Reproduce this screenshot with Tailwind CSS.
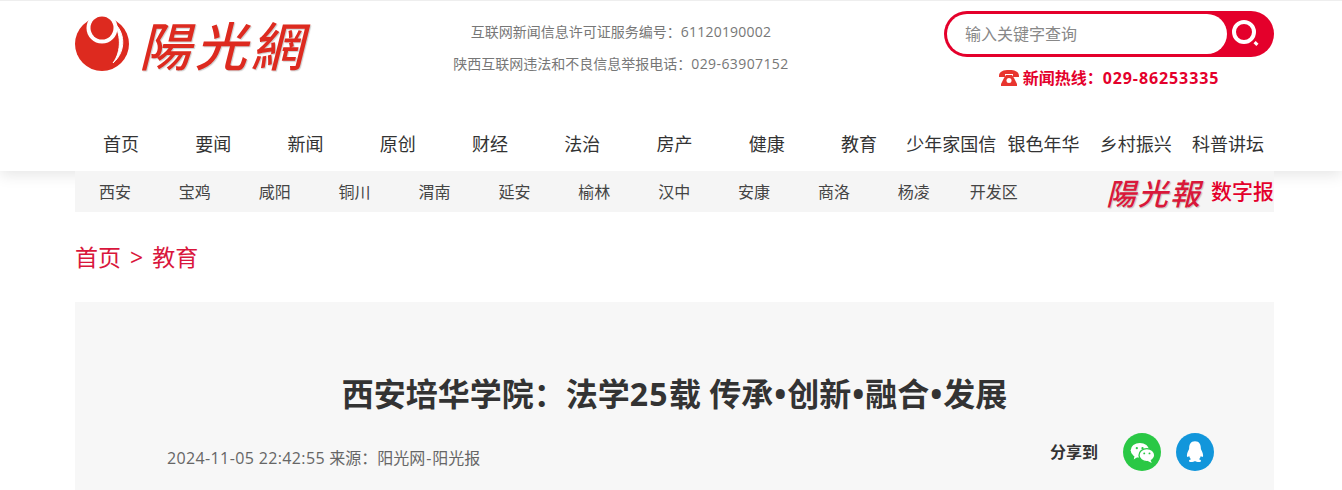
<!DOCTYPE html>
<html lang="zh-CN">
<head>
    <meta charset="UTF-8">
    <title>西安培华学院：法学25载 传承•创新•融合•发展</title>
    <script src="https://cdn.jsdelivr.net/npm/@tailwindcss/browser@4"></script>
</head>
<body class="bg-white h-[490px] overflow-hidden font-['Open_Sans','Noto_Sans_CJK_SC',sans-serif]">
    <!-- Header -->
    <header class="bg-white h-[171px] border-t border-[#eee] shadow-[0_4px_14px_rgba(0,0,0,0.1)] relative">
        <div class="w-[1199px] ml-[75px]">
            <div class="flex h-[119px]">
                <!-- Logo -->
                <div class="w-[330px] flex items-start pt-[12px]">
                    <svg width="58" height="60" viewBox="0 0 58 60" class="shrink-0">
                        <circle cx="27" cy="31" r="27" fill="#dd2a1f"/>
                        <circle cx="27" cy="15" r="15.5" fill="#fff"/>
                        <circle cx="27" cy="15" r="11.5" fill="#dd2a1f"/>
                        <path d="M38 9 C50 18 52 38 38 50 C47 38 46 20 38 9 Z" fill="#fff" stroke="#fff" stroke-width="1"/>
                    </svg>
                    <span class="ml-[6px] text-[52px] leading-[62px] tracking-[4px] text-[#dd2a1f] font-medium italic font-['Noto_Sans_CJK_TC',sans-serif] whitespace-nowrap [text-shadow:1px_1px_1px_rgba(0,0,0,0.2)]">陽光網</span>
                </div>
                <!-- Licence -->
                <div class="w-[430px] text-center text-sm text-[#777] ml-[1px] pt-[20px]">
                    <p class="leading-[22px]">互联网新闻信息许可证服务编号：<span class="tracking-[0.2px]">61120190002</span></p>
                    <p class="leading-[22px] mt-[10px]">陕西互联网违法和不良信息举报电话：<span class="tracking-[0.4px]">029-63907152</span></p>
                </div>
                <!-- Search -->
                <div class="ml-auto w-[330px] pt-[10px]">
                    <div class="h-[46px] rounded-full bg-[#e4002b] flex p-[3px] pr-0">
                        <div class="w-[280px] bg-white rounded-full flex items-center pl-[18px] text-base text-[#888]">输入关键字查询</div>
                        <div class="flex-1 flex items-center pl-[4px]">
                            <svg width="30" height="30" viewBox="0 0 30 30">
                                <circle cx="13" cy="13" r="10" fill="none" stroke="#fff" stroke-width="4"/>
                                <rect x="23" y="23" width="4" height="3" transform="rotate(45 25 24.5)" fill="#fff"/>
                            </svg>
                        </div>
                    </div>
                    <div class="flex items-center justify-center mt-[10px] text-[#e4002b] font-bold text-base leading-[22px]">
                        <svg width="20" height="18" viewBox="0 0 20 18" class="mr-[4px]">
                            <path d="M0 7 C0 2 5 1 10 1 C15 1 20 2 20 7 L20 8 L14 8 L14 5 L6 5 L6 8 L0 8 Z" fill="#e8352e"/>
                            <path d="M5 9 L7 6 L13 6 L15 9 L18 15 L18 17 L2 17 L2 15 Z" fill="#e8352e"/>
                            <circle cx="10" cy="11.5" r="2.5" fill="#fff"/>
                        </svg>
                        <span>新闻热线：<span class="tracking-[0.9px]">029-86253335</span></span>
                    </div>
                </div>
            </div>
            <!-- Main nav -->
            <nav class="flex text-lg text-[#333] leading-[48px]">
                <a class="flex-1 text-center whitespace-nowrap">首页</a>
                <a class="flex-1 text-center whitespace-nowrap">要闻</a>
                <a class="flex-1 text-center whitespace-nowrap">新闻</a>
                <a class="flex-1 text-center whitespace-nowrap">原创</a>
                <a class="flex-1 text-center whitespace-nowrap">财经</a>
                <a class="flex-1 text-center whitespace-nowrap">法治</a>
                <a class="flex-1 text-center whitespace-nowrap">房产</a>
                <a class="flex-1 text-center whitespace-nowrap">健康</a>
                <a class="flex-1 text-center whitespace-nowrap">教育</a>
                <a class="flex-1 text-center whitespace-nowrap">少年家国信</a>
                <a class="flex-1 text-center whitespace-nowrap">银色年华</a>
                <a class="flex-1 text-center whitespace-nowrap">乡村振兴</a>
                <a class="flex-1 text-center whitespace-nowrap">科普讲坛</a>
            </nav>
        </div>
    </header>

    <main class="w-[1199px] ml-[75px] relative">
        <!-- City nav -->
        <div class="h-[41px] bg-[#f5f5f5] flex items-center text-base text-[#444]">
            <a class="w-[79.9px] text-center">西安</a>
            <a class="w-[79.9px] text-center">宝鸡</a>
            <a class="w-[79.9px] text-center">咸阳</a>
            <a class="w-[79.9px] text-center">铜川</a>
            <a class="w-[79.9px] text-center">渭南</a>
            <a class="w-[79.9px] text-center">延安</a>
            <a class="w-[79.9px] text-center">榆林</a>
            <a class="w-[79.9px] text-center">汉中</a>
            <a class="w-[79.9px] text-center">安康</a>
            <a class="w-[79.9px] text-center">商洛</a>
            <a class="w-[79.9px] text-center">杨凌</a>
            <a class="w-[79.9px] text-center">开发区</a>
            <div class="ml-auto flex items-center">
                <span class="text-[30px] leading-[36px] tracking-[2px] text-[#d9183a] font-medium italic font-['Noto_Sans_CJK_TC',sans-serif] whitespace-nowrap [text-shadow:1px_1px_1px_rgba(0,0,0,0.2)]">陽光報</span>
                <span class="ml-[9px] text-[21px] font-medium text-[#e4002b]">数字报</span>
            </div>
        </div>

        <!-- Breadcrumb -->
        <div class="h-[90px] flex items-center text-[23px] text-[#d9163c]">
            <a>首页</a><span class="mx-[9px]">&gt;</span><a>教育</a>
        </div>

        <!-- Article head -->
        <div class="bg-[#f7f7f7] h-[188px] pt-[68px] relative">
            <h1 class="text-center text-[32px] leading-[48px] font-bold text-[#333]">西安培华学院：法学<span class="tracking-[1.3px]">25</span>载 传承<span class="mx-[1px]">•</span>创新<span class="mx-[1px]">•</span>融合<span class="mx-[1px]">•</span>发展</h1>
            <div class="flex items-center justify-between pl-[92px] pr-[60px] mt-[15px]">
                <p class="text-base text-[#666] mt-[12px]"><span class="tracking-[0.37px]">2024-11-05 22:42:55</span> 来源：阳光网<span class="mx-[1px]">-</span>阳光报</p>
                <div class="flex items-center">
                    <span class="text-base font-bold text-[#333] mr-[25px]">分享到</span>
                    <span class="w-[38px] h-[38px] rounded-full bg-[#2ac845] flex items-center justify-center mr-[15px]">
                        <svg width="25" height="21" viewBox="0 0 28 24">
                            <ellipse cx="11" cy="9.5" rx="10.5" ry="8.5" fill="#fff"/>
                            <path d="M5 15 L4 20 L10 16 Z" fill="#fff"/>
                            <ellipse cx="19" cy="15" rx="9" ry="7.5" fill="#fff" stroke="#2ac845" stroke-width="1.5"/>
                            <path d="M23 20 L24.5 24 L19 21 Z" fill="#fff"/>
                            <circle cx="7.5" cy="7" r="1.3" fill="#2ac845"/>
                            <circle cx="14" cy="7" r="1.3" fill="#2ac845"/>
                            <circle cx="16" cy="13" r="1.1" fill="#2ac845"/>
                            <circle cx="22" cy="13" r="1.1" fill="#2ac845"/>
                        </svg>
                    </span>
                    <span class="w-[38px] h-[38px] rounded-full bg-[#1296db] flex items-center justify-center">
                        <svg width="18" height="22" viewBox="0 0 20 24">
                            <path d="M10 0 C5 0 3.5 4 3.5 8 C3.5 9.5 1 12 1 16 C1 18 2 18 3.5 16.5 C4 18 4.5 19 5.5 20 C3.5 20.5 3 21.5 3.5 22.5 C4.5 23.5 8 23.5 10 22 C12 23.5 15.5 23.5 16.5 22.5 C17 21.5 16.5 20.5 14.5 20 C15.5 19 16 18 16.5 16.5 C18 18 19 18 19 16 C19 12 16.5 9.5 16.5 8 C16.5 4 15 0 10 0 Z" fill="#fff"/>
                        </svg>
                    </span>
                </div>
            </div>
        </div>
    </main>
</body>
</html>
